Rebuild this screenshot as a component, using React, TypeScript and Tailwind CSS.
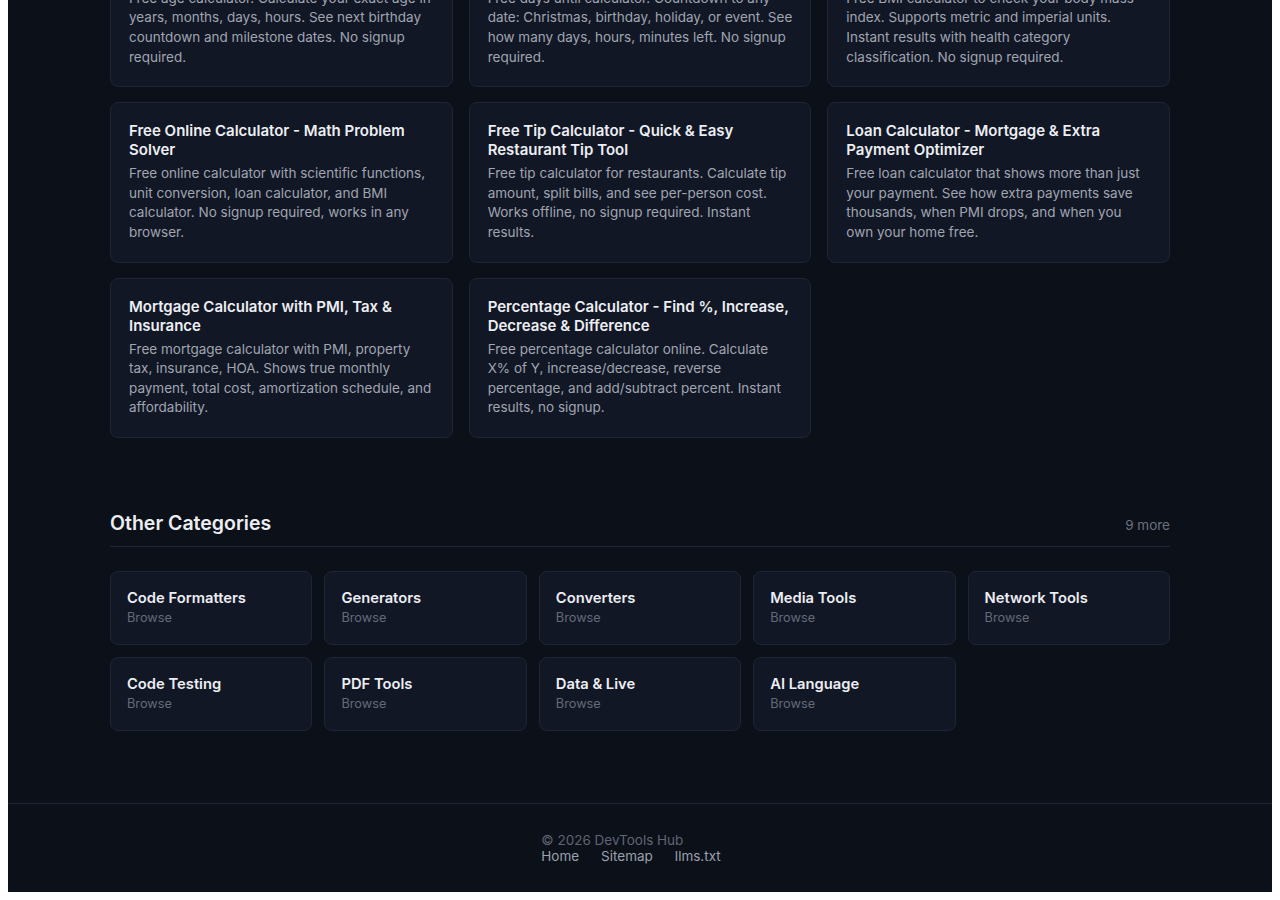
import React from 'react';

interface Tool {
  title: string;
  desc: string;
}

const tools: Tool[] = [
  {
    title: 'Age Calculator - Exact Age in Years, Months & Days',
    desc: 'Free age calculator. Calculate your exact age in years, months, days, hours. See next birthday countdown and milestone dates. No signup required.',
  },
  {
    title: 'Days Until Calculator - Countdown to Any Date',
    desc: 'Free days until calculator. Countdown to any date: Christmas, birthday, holiday, or event. See how many days, hours, minutes left. No signup required.',
  },
  {
    title: 'BMI Calculator - Check Your Body Mass Index',
    desc: 'Free BMI calculator to check your body mass index. Supports metric and imperial units. Instant results with health category classification. No signup required.',
  },
  {
    title: 'Free Online Calculator - Math Problem Solver',
    desc: 'Free online calculator with scientific functions, unit conversion, loan calculator, and BMI calculator. No signup required, works in any browser.',
  },
  {
    title: 'Free Tip Calculator - Quick & Easy Restaurant Tip Tool',
    desc: 'Free tip calculator for restaurants. Calculate tip amount, split bills, and see per-person cost. Works offline, no signup required. Instant results.',
  },
  {
    title: 'Loan Calculator - Mortgage & Extra Payment Optimizer',
    desc: 'Free loan calculator that shows more than just your payment. See how extra payments save thousands, when PMI drops, and when you own your home free.',
  },
  {
    title: 'Mortgage Calculator with PMI, Tax & Insurance',
    desc: 'Free mortgage calculator with PMI, property tax, insurance, HOA. Shows true monthly payment, total cost, amortization schedule, and affordability.',
  },
  {
    title: 'Percentage Calculator - Find %, Increase, Decrease & Difference',
    desc: 'Free percentage calculator online. Calculate X% of Y, increase/decrease, reverse percentage, and add/subtract percent. Instant results, no signup.',
  },
];

const categories = [
  'Code Formatters',
  'Generators',
  'Converters',
  'Media Tools',
  'Network Tools',
  'Code Testing',
  'PDF Tools',
  'Data & Live',
  'AI Language',
];

function ToolCard({ tool }: { tool: Tool }) {
  return (
    <a
      href="#"
      className="block rounded-lg border border-[#1e2536] bg-[#121726] px-[18px] pt-[18px] pb-[19px] hover:border-[#2c3548]"
    >
      <h3 className="mb-[5px] text-[15px] leading-[19px] font-semibold text-[#eceef2]">{tool.title}</h3>
      <p className="text-[13.5px] leading-[19.6px] text-[#a0a5b0]">{tool.desc}</p>
    </a>
  );
}

export default function App() {
  return (
    <div className="h-[900px] overflow-hidden bg-white px-2 pb-2">
      <div
        className="flex h-full flex-col justify-end overflow-hidden bg-[#0c1019]"
        style={{ fontFamily: 'Inter, "Noto Sans", sans-serif' }}
      >
        <main className="mx-auto w-full max-w-[1060px]">
          <section className="grid grid-cols-3 gap-x-4 gap-y-[15px]">
            {tools.map((t) => (
              <ToolCard key={t.title} tool={t} />
            ))}
          </section>

          <section className="mt-[71px]">
            <div className="flex items-baseline justify-between border-b border-[#1e2536] pb-[9px]">
              <h2 className="text-[19.5px] leading-7 font-semibold text-[#eceef2]">Other Categories</h2>
              <span className="text-[13.5px] text-[#6b7180]">9 more</span>
            </div>
            <div className="mt-6 grid grid-cols-5 gap-3">
              {categories.map((c) => (
                <a
                  key={c}
                  href="#"
                  className="block rounded-lg border border-[#1e2536] bg-[#121726] p-4 hover:border-[#2c3548]"
                >
                  <div className="text-[14.75px] leading-5 font-semibold text-[#eceef2]">{c}</div>
                  <div className="text-[12.75px] leading-5 text-[#646a78]">Browse</div>
                </a>
              ))}
            </div>
          </section>
        </main>

        <footer className="mt-[72px] border-t border-[#1e2536] py-7">
          <div className="flex justify-center">
            <div className="mr-[18px] text-[13.5px] leading-4">
              <div className="text-[#5f6573]">© 2026 DevTools Hub</div>
              <nav className="flex gap-[22px] text-[#9ba1ad]">
                <a href="#">Home</a>
                <a href="#">Sitemap</a>
                <a href="#">llms.txt</a>
              </nav>
            </div>
          </div>
        </footer>
      </div>
    </div>
  );
}
